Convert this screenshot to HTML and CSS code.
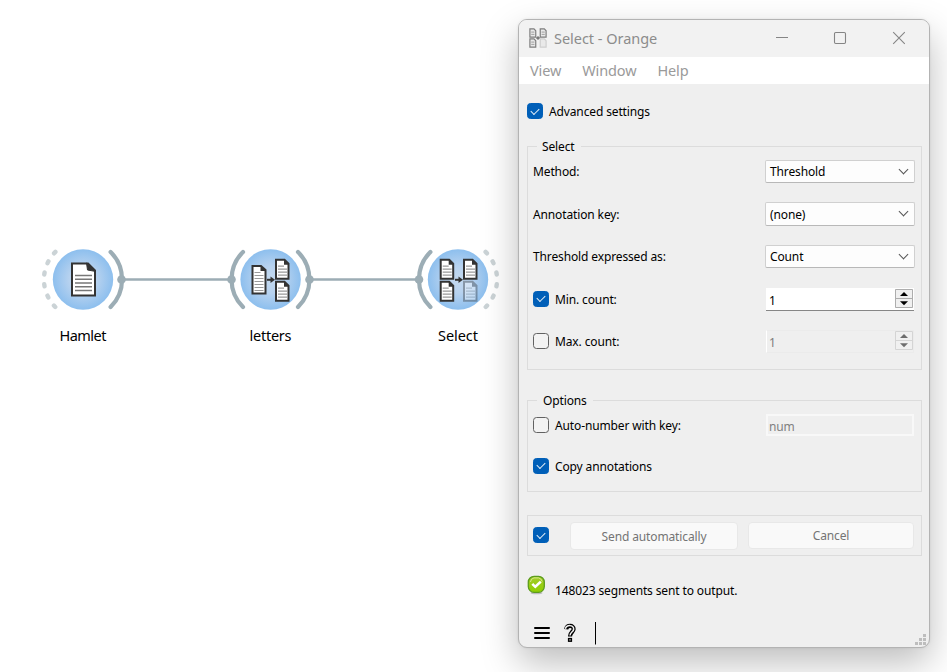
FILE: index.html
```html
<!DOCTYPE html>
<html lang="en">
<head>
<meta charset="utf-8">
<title>Select - Orange</title>
<link rel="stylesheet" href="styles.css">
</head>
<body>
<svg class="canvas" width="947" height="672" viewBox="0 0 947 672">
  <defs>
    <radialGradient id="disc"><stop offset="0" stop-color="#c4d9ef"/><stop offset=".45" stop-color="#b7d2ef"/><stop offset="1" stop-color="#8dbfee"/></radialGradient>
    <symbol id="doc" viewBox="0 0 15 21" overflow="visible">
      <path d="M1 1H9.5L13.5 5V20H1Z" fill="#fff" stroke="#333" stroke-width="2"/>
      <path d="M9 1L14 6H9Z" fill="#333"/>
      <path d="M3 7.5H9M3 10.5H12M3 13.5H12M3 16.5H12" stroke="#999" stroke-width="1.2"/>
    </symbol>
    <symbol id="talldoc" viewBox="0 0 15 30" overflow="visible">
      <path d="M1 1H9.5L14 5V28.5H1Z" fill="#fff" stroke="#333" stroke-width="2"/>
      <path d="M9 1L14.5 6H9Z" fill="#333"/>
      <path d="M3 7.5H9M3 10.5H12M3 13.5H12M3 16.5H12M3 19.5H12M3 22.5H12M3 25.5H12" stroke="#999" stroke-width="1.2"/>
    </symbol>
    <symbol id="arrow" viewBox="0 0 8 7" overflow="visible">
      <path d="M0 3.5H4" stroke="#333" stroke-width="2"/><path d="M3.5 .2L8 3.5L3.5 6.8Z" fill="#333"/>
    </symbol>
  </defs>
  <g class="link"><path d="M122 279.5H231"/><path d="M309.5 279.5H419"/></g>
  <g class="anchor">
    <path d="M110.6 251.9A39 39 0 0 1 110.6 307.1"/>
    <path d="M243 251.9A39 39 0 0 0 243 307.1"/>
    <path d="M298 251.9A39 39 0 0 1 298 307.1"/>
    <path d="M430.4 251.9A39 39 0 0 0 430.4 307.1"/>
  </g>
  <g class="anchor open">
    <path d="M55.4 251.9A39 39 0 0 0 55.4 307.1"/>
    <path d="M485.6 251.9A39 39 0 0 1 485.6 307.1"/>
  </g>
  <g class="port"><circle cx="121.5" cy="279.5" r="4.3"/><circle cx="231.5" cy="279.5" r="4.3"/><circle cx="309.5" cy="279.5" r="4.3"/><circle cx="419" cy="279.5" r="4.3"/></g>
  <g fill="url(#disc)"><circle cx="83" cy="279.5" r="30.2"/><circle cx="270.6" cy="279.5" r="30.2"/><circle cx="458" cy="279.5" r="30.2"/></g>
  <path d="M72 263.5H88L95 270.5V295.5H72Z" fill="#fff" stroke="#333" stroke-width="2"/>
  <path d="M86.5 263L96 271.5L87.5 270Z" fill="#333" stroke="#333"/>
  <path d="M75 275.5H92M75 279.2H92M75 283H92M75 286.8H92M75 290.5H92" stroke="#777" stroke-width="1.5"/>
  <use href="#talldoc" x="251.5" y="265" width="15" height="30"/>
  <use href="#arrow" x="267" y="276.3" width="8" height="7"/>
  <use href="#doc" x="275" y="258.7" width="15" height="21"/>
  <use href="#doc" x="275" y="280.7" width="15" height="21"/>
  <use href="#doc" x="439.7" y="258.7" width="15" height="21"/>
  <use href="#doc" x="439.7" y="280.7" width="15" height="21"/>
  <use href="#arrow" x="455" y="276.3" width="8" height="7"/>
  <use href="#doc" x="463" y="258.7" width="15" height="21"/>
  <use href="#doc" x="463" y="280.7" width="15" height="21" opacity=".38"/>
  <g class="name">
    <text x="83" y="341" textLength="47">Hamlet</text>
    <text x="270.5" y="341" textLength="42">letters</text>
    <text x="458" y="341" textLength="40">Select</text>
  </g>
</svg>

<section class="window">
  <header class="titlebar">
    <svg class="appicon" width="18" height="20" viewBox="439 258 40 44" preserveAspectRatio="none" opacity=".75">
      <g id="pair">
        <path d="M441 260H450L454 264V278H441ZM441 282H450L454 286V300H441ZM464 260H473L477 264V278H464Z" fill="#e6e6e6" stroke="#555" stroke-width="2.6"/>
        <path d="M444 267H451M444 272H451M444 289H451M444 294H451M467 267H474M467 272H474" stroke="#777" stroke-width="2"/>
        <path d="M455 280H463M459 276V284" stroke="#444" stroke-width="3"/>
        <path d="M464 282H473L477 286V300H464Z" fill="#e6e6e6" stroke="#c2c2c2" stroke-width="2.6"/>
      </g>
    </svg>
    <h1>Select - Orange</h1>
    <svg class="controls" width="132" height="14" viewBox="0 0 132 14">
      <path d="M1 6.5H13"/><rect x="59.5" y="1.5" width="11" height="11" rx="1.2"/><path d="M118.2 1.2L129.8 12.8M129.8 1.2L118.2 12.8"/>
    </svg>
  </header>
  <nav class="menu"><span>View</span><span>Window</span><span>Help</span></nav>
  <div class="body">
    <div class="line advanced"><i class="check on"></i><span>Advanced settings</span></div>

    <div class="group select-group">
      <span class="legend">Select</span>
      <div class="row"><span>Method:</span><div class="combo"><span>Threshold</span><i></i></div></div>
      <div class="row"><span>Annotation key:</span><div class="combo tall"><span>(none)</span><i></i></div></div>
      <div class="row"><span>Threshold expressed as:</span><div class="combo"><span>Count</span><i></i></div></div>
      <div class="row"><div class="line"><i class="check on"></i><span>Min. count:</span></div>
        <div class="spin"><span>1</span><svg width="18" height="19" viewBox="0 0 18 19"><path class="frame" d="M.5 .5H17.5V18.5H.5ZM.5 9.5H17.5"/><path d="M5 7H13L9 3ZM5 12.3H13L9 16.3Z"/></svg></div></div>
      <div class="row"><div class="line"><i class="check"></i><span>Max. count:</span></div>
        <div class="spin off"><span>1</span><svg width="18" height="19" viewBox="0 0 18 19"><path class="frame" d="M.5 .5H17.5V18.5H.5ZM.5 9.5H17.5"/><path d="M5 7H13L9 3ZM5 12.3H13L9 16.3Z"/></svg></div></div>
    </div>

    <div class="group options-group">
      <span class="legend">Options</span>
      <div class="row"><div class="line"><i class="check"></i><span>Auto-number with key:</span></div><div class="field">num</div></div>
      <div class="row"><div class="line"><i class="check on"></i><span>Copy annotations</span></div></div>
    </div>

    <div class="group send">
      <i class="check on"></i>
      <div class="button auto">Send automatically</div>
      <div class="button cancel">Cancel</div>
    </div>

    <div class="status">
      <svg width="18" height="20" viewBox="0 0 18 20">
        <defs><linearGradient id="ok" x2="0" y2="1"><stop offset="0" stop-color="#a4cb2b"/><stop offset="1" stop-color="#8fd000"/></linearGradient></defs>
        <ellipse cx="9.5" cy="18" rx="6" ry="1.3" fill="#bbb"/>
        <rect x="1.3" y="1.3" width="16" height="16" rx="5.8" fill="url(#ok)" stroke="#5c9c1c" stroke-width="1.3"/>
        <path d="M3.4 7Q4 3.4 7 2.9H11.5Q14.4 3.4 15.2 6.5" fill="none" stroke="#d3e88d"/>
        <path d="M5.3 8.8L8.3 11.8L13.8 6.6" fill="none" stroke="#fff" stroke-width="2.6"/>
      </svg>
      <span>148023 segments sent to output.</span>
    </div>
    <footer class="footer">
      <svg width="64" height="24" viewBox="0 0 64 24">
        <path d="M3 7H17M3 12H17M3 17H17" fill="none" stroke="#000" stroke-width="2" stroke-linecap="round"/>
        <path d="M34.2 8.2C34.8 3.8 41.8 3.8 41.6 8.2C41.4 11 38 11.2 38 15.4" fill="none" stroke="#000" stroke-width="4.2"/>
        <path d="M33.4 7.8C34.4 3.6 41.9 3.4 41.7 8.2C41.5 11 38 11.2 38 14.4" fill="none" stroke="#efefef" stroke-width="1.5"/>
        <rect x="36.6" y="17.6" width="2.8" height="2.6" fill="#ccc" stroke="#000" stroke-width="1.4"/>
        <path d="M63.5 1V23.5" stroke="#000"/>
      </svg>
      <svg class="grip" width="11" height="11" viewBox="0 0 11 11"><path d="M8 0h3v3h-3zM4 4h3v3h-3zM8 4h3v3h-3zM0 8h3v3h-3zM4 8h3v3h-3zM8 8h3v3h-3z" fill="#bdbdbd"/></svg>
    </footer>
  </div>
</section>
</body>
</html>
```
FILE: styles.css
```css
* { box-sizing: border-box; }
body {
  margin: 0;
  width: 947px;
  height: 672px;
  position: relative;
  overflow: hidden;
  background: #fff;
  color: #000;
  font: 12px/16px "Noto Sans", sans-serif;
  letter-spacing: -.13px;
  white-space: nowrap;
}
.canvas { display: block; }
.link path { stroke: #9cadb5; stroke-width: 2.6; }
.anchor path { fill: none; stroke: #9cadb5; stroke-width: 4.2; stroke-linecap: round; }
.anchor.open path { stroke: #cbd3d6; stroke-width: 4.4; stroke-dasharray: 2 9.8; }
.port { fill: #9cadb5; }
.name { font-size: 14.5px; letter-spacing: 0; text-anchor: middle; }

.window {
  position: absolute;
  left: 518px;
  top: 19px;
  width: 412px;
  height: 629px;
  display: flex;
  flex-direction: column;
  overflow: hidden;
  border: 1px solid #b3b3b3;
  border-radius: 9px;
  background: #efefef;
  box-shadow: 0 15px 36px rgba(0, 0, 0, .26), 0 0 3px rgba(0, 0, 0, .08);
}
.titlebar {
  height: 37px;
  flex: none;
  display: flex;
  align-items: center;
  padding: 0 22px 2px 10px;
  background: #f2f2f2;
  color: #8c8c8c;
}
.appicon { margin-top: 1px; }
.titlebar h1 {
  margin: 0 0 0 7px;
  font-size: 14.5px;
  font-weight: 400;
  letter-spacing: -.03px;
}
.controls { margin-left: auto; fill: none; stroke: #858585; stroke-width: 1.1; }
.menu {
  height: 27px;
  flex: none;
  display: flex;
  align-items: center;
  gap: 21px;
  padding: 0 0 2px 11px;
  background: #fff;
  color: #9a9a9a;
  font-size: 14.5px;
}
.body {
  flex: 1;
  display: flex;
  flex-direction: column;
  padding: 19px 7px 0 8px;
}
.line { display: flex; align-items: center; gap: 6px; }
.line span, .row > span { padding-top: 2px; }
.advanced { height: 16px; }
.check {
  width: 16px;
  height: 16px;
  flex: none;
  display: grid;
  place-items: center;
  border: 1px solid #626262;
  border-radius: 3.5px;
  background: #f3f3f3;
}
.check.on { border-color: #005fb8; background: #005fb8; }
.check.on::after {
  content: "";
  width: 7px;
  height: 4px;
  margin-top: -2px;
  border: solid #e6f0f8;
  border-width: 0 0 1px 1px;
  transform: rotate(-45deg);
}
.group { position: relative; width: 395px; border: 1px solid #dcdcdc; }
.legend {
  position: absolute;
  left: 9px;
  top: -8px;
  padding: 0 6px 0 5px;
  background: #efefef;
}
.options-group .legend { padding-left: 6px; }
.select-group { height: 224px; margin-top: 27px; padding: 3px 6px 0 5px; }
.row { display: flex; justify-content: space-between; align-items: center; height: 42.5px; }
.combo {
  width: 150px;
  height: 23px;
  display: flex;
  align-items: center;
  justify-content: space-between;
  padding: 0 7px 0 4px;
  border: 1px solid #d0d0d0;
  border-bottom-color: #b8b8b8;
  border-radius: 2px;
  background: #fdfdfd;
}
.combo span { padding-top: 1px; }
.tall { height: 24px; }
.tall span { padding-top: 2px; }
.combo i {
  width: 7px;
  height: 7px;
  margin: -4px 0 0;
  border: solid #555;
  border-width: 0 1px 1px 0;
  transform: rotate(45deg);
}
.spin {
  width: 148px;
  height: 23px;
  display: flex;
  justify-content: space-between;
  align-items: center;
  margin: 1px 1px 0 0;
  padding: 2px 1px 0 3px;
  border-bottom: 1px solid #868686;
  background: #fff;
}
.spin span { padding-top: 2px; }
.spin svg { margin-top: -3px; background: #f0f0f0; }
.frame { fill: none; stroke: #adadad; }
.spin.off {
  margin-top: 0;
  padding: 2px 0 0 2px;
  border: 1px solid #ebebeb;
  border-left-color: #fff;
  background: #efefef;
  color: #7d7d7d;
}
.off svg { fill: #6d6d6d; }
.off .frame { stroke: #d4d4d4; }
.options-group { height: 92px; margin-top: 30px; padding: 3px 6px 0 5px; }
.options-group .row { height: 41px; }
.options-group .line span { padding-top: 2px; }
.field {
  width: 148px;
  height: 22px;
  margin-right: 1px;
  padding: 3px 1px 0;
  border: 2px solid #f8f8f8;
  line-height: 15px;
  color: #808080;
}
.send { height: 41px; margin-top: 23px; padding: 6px 7px 0 5px; display: flex; }
.send .check { margin-top: 5px; }
.button {
  height: 28px;
  border: 1px solid #e8e8e8;
  border-radius: 4px;
  background: #f9f9f9;
  color: #747474;
  text-align: center;
  line-height: 27px;
}
.auto { width: 168px; margin-left: 21px; }
.cancel { width: 166px; height: 27px; margin-left: 10px; line-height: 26px; }
.status { display: flex; height: 28px; margin-top: 19px; gap: 10px; }
.status span { line-height: 31px; }
.footer { display: flex; justify-content: space-between; height: 26px; margin-top: 18px; padding-left: 5px; }
.grip { margin: 13px -4px 0 0; }
```
